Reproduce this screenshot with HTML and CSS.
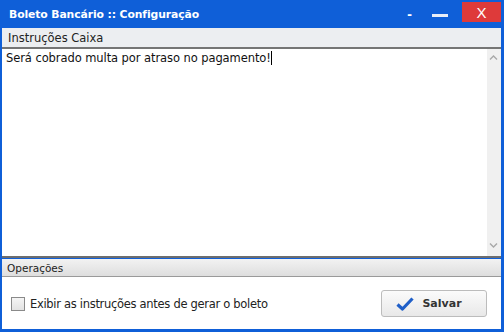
FILE: index.html
```html
<!DOCTYPE html>
<html lang="pt-BR">
<head>
    <meta charset="UTF-8">
    <title>Boleto Bancário :: Configuração</title>
    <link rel="stylesheet" href="styles.css">
</head>
<body>
    <div class="window">
        <div class="titlebar">
            <span class="title">Boleto Bancário :: Configuração</span>
            <div class="controls">
                <span class="ctl ctl-min">-</span>
                <span class="ctl ctl-max"></span>
                <span class="ctl ctl-close">X</span>
            </div>
        </div>
        <div class="panel-head">Instruções Caixa</div>
        <div class="editor">
            <div class="editor-text">Será cobrado multa por atraso no pagamento!<span class="caret"></span></div>
            <div class="scrollbar">
                <svg width="13" height="10" viewBox="0 0 13 10"><path d="M3 6.5 L6.5 3 L10 6.5" fill="none" stroke="#a8a8a8" stroke-width="1.4"/></svg>
                <svg width="13" height="10" viewBox="0 0 13 10"><path d="M3 3.5 L6.5 7 L10 3.5" fill="none" stroke="#a8a8a8" stroke-width="1.4"/></svg>
            </div>
        </div>
        <div class="panel-head panel-head-small">Operações</div>
        <div class="footer">
            <label class="check">
                <span class="box"></span>
                Exibir as instruções antes de gerar o boleto
            </label>
            <button class="btn">
                <svg width="18" height="14" viewBox="0 0 18 14"><path d="M1.5 7.5 L6.5 12 L16.5 1.5" fill="none" stroke="#1f5fc8" stroke-width="3.2" stroke-linejoin="round"/></svg>
                Salvar
            </button>
        </div>
    </div>
</body>
</html>
```

FILE: styles.css
```css
body {
    margin: 0;
    font-family: 'DejaVu Sans', sans-serif;
}
.window {
    width: 504px;
    height: 332px;
    box-sizing: border-box;
    background-color: #0f5fd8;
    padding: 0 3px 3px 2px;
    display: flex;
    flex-direction: column;
}
.titlebar {
    height: 28px;
    display: flex;
    align-items: center;
    justify-content: space-between;
    color: #fff;
}
.title {
    font-family: 'DejaVu Sans', sans-serif;
    font-weight: bold;
    font-size: 10.8px;
    padding-left: 7px;
    letter-spacing: -0.1px;
}
.controls {
    display: flex;
    align-items: center;
    height: 100%;
}
.ctl {
    font-family: 'Liberation Sans', sans-serif;
    font-size: 14px;
    color: #fff;
}
.ctl-min {
    margin-right: 20px;
    font-weight: bold;
}
.ctl-max {
    width: 16px;
    height: 3px;
    background-color: #e8eef8;
    margin-right: 14px;
    margin-top: 2px;
}
.ctl-close {
    width: 39px;
    height: 20px;
    margin-top: -4px;
    background-color: #de3a3a;
    display: flex;
    align-items: center;
    justify-content: center;
    font-size: 15px;
}
.panel-head {
    height: 19px;
    background-color: #eceef1;
    border-bottom: 2px solid #757575;
    font-family: 'DejaVu Sans', sans-serif;
    font-size: 11.5px;
    color: #222;
    padding-left: 6px;
    display: flex;
    align-items: center;
}
.panel-head-small {
    height: 17px;
    border-bottom: 1px solid #9a9a9a;
    background: linear-gradient(#f2f2f2, #dedede);
    font-size: 10.5px;
    padding-left: 5px;
}
.editor {
    flex: 1;
    background-color: #fff;
    border-bottom: 2px solid #6e6e6e;
    display: flex;
    margin-bottom: 1px;
}
.editor-text {
    flex: 1;
    padding: 2px 4px;
    font-family: 'DejaVu Sans', sans-serif;
    font-size: 11.5px;
    color: #111;
    letter-spacing: -0.08px;
}
.caret {
    display: inline-block;
    width: 1px;
    height: 14px;
    background-color: #000;
    vertical-align: -3px;
}
.scrollbar {
    width: 14px;
    background-color: #f0f0f0;
    display: flex;
    flex-direction: column;
    justify-content: space-between;
    padding: 4px 0 6px;
    box-sizing: border-box;
}
.footer {
    height: 51px;
    background-color: #fff;
    display: flex;
    align-items: center;
    justify-content: space-between;
    padding: 1px 14px 0 9px;
}
.check {
    display: flex;
    align-items: center;
    font-family: 'DejaVu Sans', sans-serif;
    font-size: 11.5px;
    color: #222;
    letter-spacing: -0.3px;
}
.box {
    width: 12px;
    height: 12px;
    border: 1px solid #8a8a8a;
    background: linear-gradient(#f4f4f4, #e2e2e2);
    margin-right: 5px;
}
.btn {
    width: 106px;
    height: 27px;
    border: 1px solid #bcbcbc;
    border-radius: 3px;
    background: linear-gradient(#fbfbfb, #e8e8e8);
    display: flex;
    align-items: center;
    justify-content: center;
    gap: 8px;
    font-family: 'DejaVu Sans', sans-serif;
    font-weight: bold;
    font-size: 11px;
    color: #333;
    padding: 0 10px 0 0;
}
```
